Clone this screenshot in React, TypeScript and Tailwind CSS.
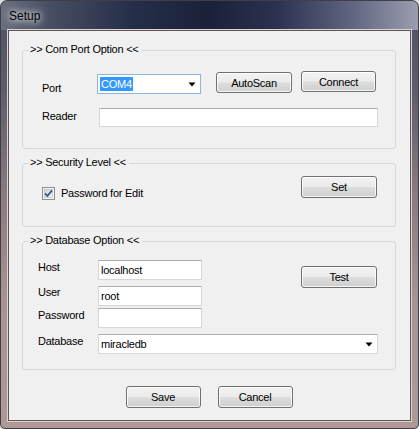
import React from "react";

const font = "font-['Liberation_Sans',Arial,sans-serif] text-[11px] leading-[13px] tracking-[-0.25px] text-black";

function Btn({ label, className = "" }: { label: string; className?: string }) {
  return (
    <div
      className={`flex items-center justify-center rounded-[3px] border border-[#707070] bg-[linear-gradient(180deg,#f2f2f2_0%,#ebebeb_48%,#dddddd_52%,#cfcfcf_100%)] shadow-[inset_0_0_0_1px_rgba(255,255,255,0.8)] ${className}`}
    >
      <span className="pt-[1px]">{label}</span>
    </div>
  );
}

function Arrow() {
  return (
    <svg width="8" height="5" viewBox="0 0 8 5" className="shrink-0">
      <polygon points="0.5,0.5 7.5,0.5 4,4.5" fill="#000" />
    </svg>
  );
}

function TextBox({ value = "", className = "" }: { value?: string; className?: string }) {
  return (
    <div
      className={`flex items-center bg-white border border-[#d3d6dc] border-t-[#abadb3] pl-[2px] ${className}`}
    >
      {value}
    </div>
  );
}

function Group({ title, className = "", children }: { title: string; className?: string; children: React.ReactNode }) {
  return (
    <div className={`relative rounded-[3px] border border-[#d5d9dc] ${className}`}>
      <span className="absolute -top-[8px] left-[6px] bg-[#f0f0f0] pl-[1px] pr-[3px] whitespace-pre">
        {title}
      </span>
      {children}
    </div>
  );
}

function CheckBox() {
  return (
    <svg width="13" height="13" viewBox="0 0 13 13" className="shrink-0">
      <defs>
        <linearGradient id="cbg" x1="0" y1="0" x2="1" y2="1">
          <stop offset="0" stopColor="#cbcfd5" />
          <stop offset="1" stopColor="#f7f7f7" />
        </linearGradient>
      </defs>
      <rect x="0.5" y="0.5" width="12" height="12" fill="#f4f4f4" stroke="#8e8f8f" />
      <rect x="2.5" y="2.5" width="8" height="8" fill="url(#cbg)" stroke="#b6b9bd" strokeWidth="0.6" />
      <path d="M3 6.4 L5.4 9 L10 3.4" fill="none" stroke="#3a4f8f" strokeWidth="1.7" />
    </svg>
  );
}

export default function App() {
  return (
    <div className="w-[419px] h-[429px] bg-[#dcdcdc]">
      <div
        className={`w-[419px] h-[429px] flex flex-col rounded-t-[7px] rounded-b-[5px] border border-[#3e3f4a] bg-[linear-gradient(180deg,#4c5266_0px,#5e5c6c_90px,#8c7c80_200px,#a89390_300px,#ae9996_429px)] ${font}`}
      >
        {/* title bar */}
        <div className="h-[29px] shrink-0 flex items-center pl-[8px] rounded-t-[6px] bg-[linear-gradient(90deg,#6a707e_0%,#464e62_12%,#252e48_32%,#1a2239_50%,#2a3250_66%,#5f6580_84%,#9b9daf_100%)]">
          <span className="font-['Liberation_Sans',Arial,sans-serif] text-[12px] tracking-normal text-black pt-[2px] [text-shadow:0_0_6px_#fff,0_0_10px_#e8eaf0]">
            Setup
          </span>
        </div>

        {/* client area */}
        <div className="mx-[7px] mb-[7px] flex-1 flex flex-col bg-[#f0f0f0] border border-[#5d5556] shadow-[0_0_0_1px_#dcd3d1] pl-[13px] pt-[19px]">
          {/* Com Port Option */}
          <Group title=">> Com Port Option <<" className="w-[374px] h-[99px] pt-[20px] pl-[19px]">
            <div className="flex items-start">
              <span className="w-[55px] mt-[11px]">Port</span>
              <div className="mt-[3px] w-[104px] h-[20px] bg-white border border-[#8fb7de] flex items-center pl-[2px] pr-[4px]">
                <span className="bg-[#3399ff] text-white px-[1px] leading-[14px]">COM4</span>
                <div className="flex-1" />
                <Arrow />
              </div>
              <Btn label="AutoScan" className="ml-[15px] mt-[1px] w-[76px] h-[21px]" />
              <Btn label="Connect" className="ml-[9px] w-[75px] h-[21px]" />
            </div>
            <div className="flex items-start mt-[13px]">
              <span className="w-[57px] mt-[2px]">Reader</span>
              <TextBox className="w-[279px] h-[19px]" />
            </div>
          </Group>

          {/* Security Level */}
          <Group title=">> Security Level <<" className="mt-[14px] w-[374px] h-[64px] pt-[12px] pl-[19px]">
            <div className="flex items-start">
              <div className="w-[259px] mt-[11px] flex items-center">
                <CheckBox />
                <span className="ml-[6px]">Password for Edit</span>
              </div>
              <Btn label="Set" className="w-[76px] h-[22px]" />
            </div>
          </Group>

          {/* Database Option */}
          <Group title=">> Database Option <<" className="mt-[14px] w-[374px] h-[129px] pt-[18px] pl-[15px]">
            <div className="flex items-start">
              <div className="flex flex-col">
                <div className="flex items-start h-[20px]">
                  <span className="w-[60px] mt-[1px]">Host</span>
                  <TextBox value="localhost" className="w-[104px] h-[20px]" />
                </div>
                <div className="flex items-start h-[20px] mt-[6px]">
                  <span className="w-[60px]">User</span>
                  <TextBox value="root" className="w-[104px] h-[20px]" />
                </div>
                <div className="flex items-start h-[20px] mt-[2px]">
                  <span className="w-[60px] mt-[1px]">Password</span>
                  <TextBox className="w-[104px] h-[20px]" />
                </div>
              </div>
              <Btn label="Test" className="ml-[99px] mt-[6px] w-[76px] h-[22px]" />
            </div>
            <div className="flex items-start mt-[6px]">
              <span className="w-[60px] mt-[1px]">Database</span>
              <div className="w-[280px] h-[20px] bg-white border border-[#d3d6dc] border-t-[#abadb3] flex items-center pl-[2px] pr-[4px]">
                <span>miracledb</span>
                <div className="flex-1" />
                <Arrow />
              </div>
            </div>
          </Group>

          {/* bottom buttons */}
          <div className="mt-[16px] w-[374px] flex justify-center gap-[17px]">
            <Btn label="Save" className="w-[75px] h-[22px]" />
            <Btn label="Cancel" className="w-[75px] h-[22px]" />
          </div>
        </div>
      </div>
    </div>
  );
}
